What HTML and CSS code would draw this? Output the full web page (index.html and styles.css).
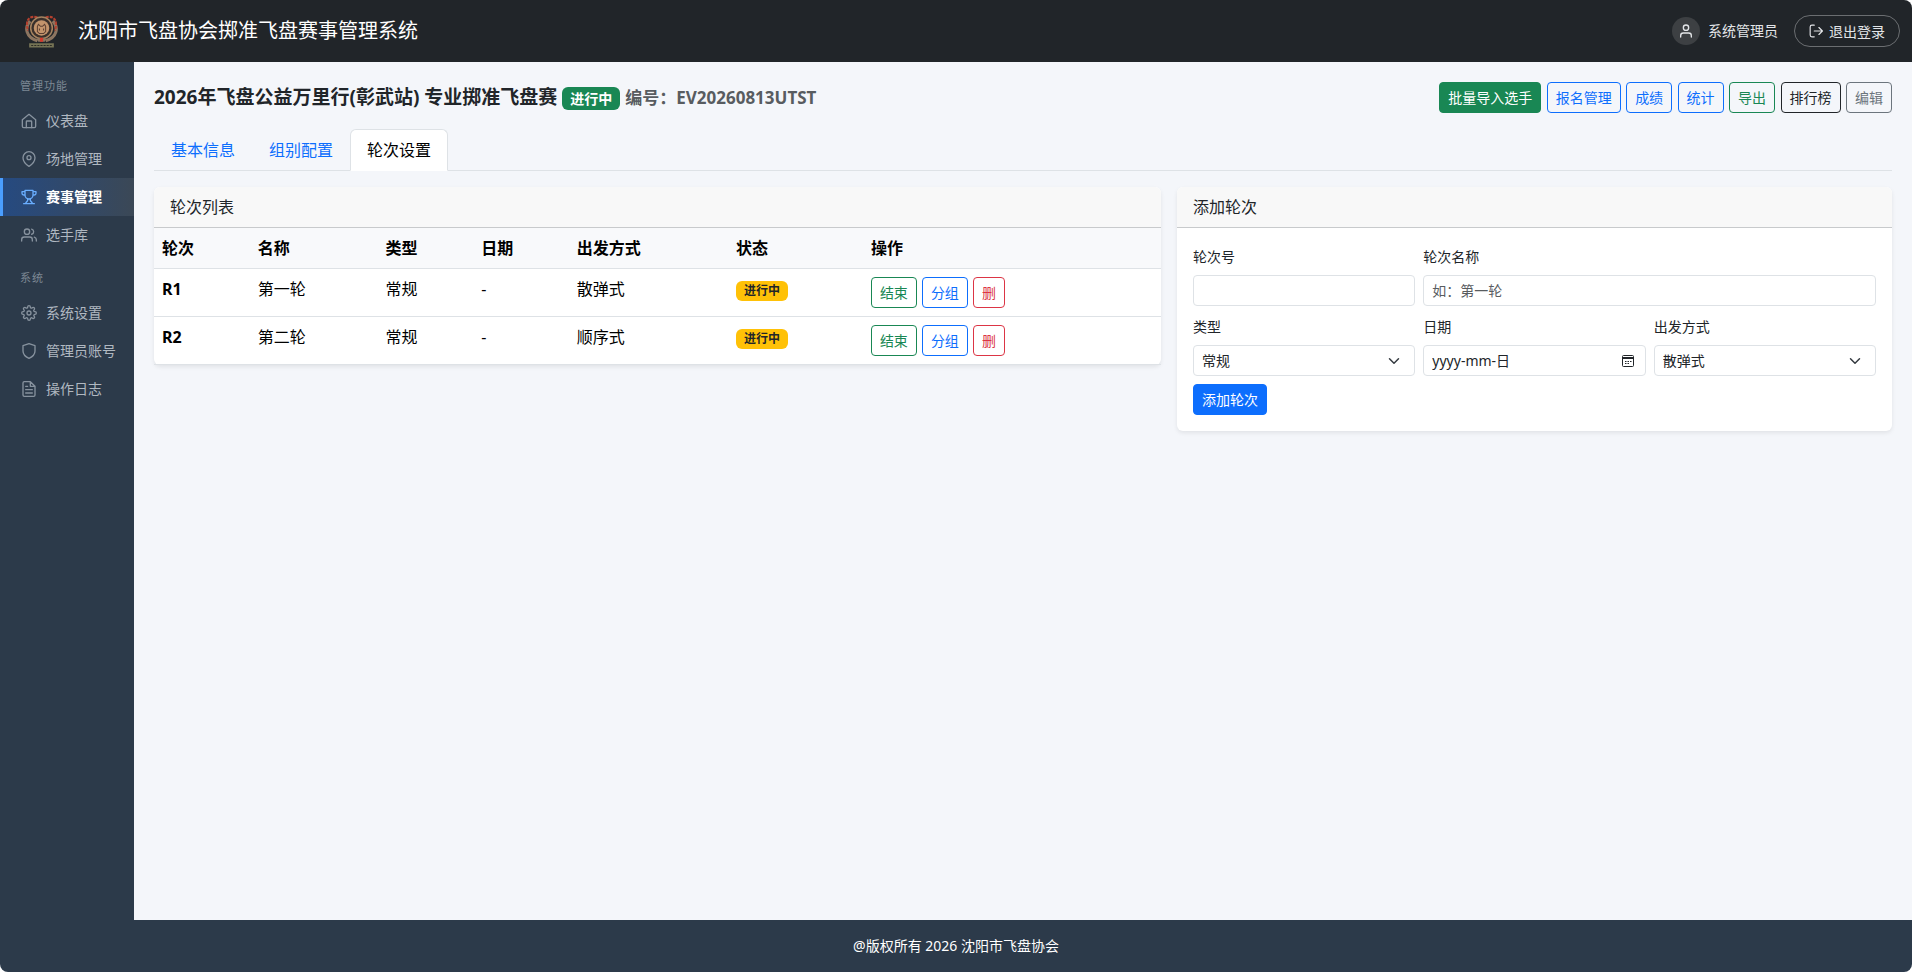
FILE: index.html
```html
<!DOCTYPE html>
<html lang="zh-CN">
<head>
    <meta charset="UTF-8">
    <meta name="viewport" content="width=device-width, initial-scale=1.0">
    <title>沈阳市飞盘协会掷准飞盘赛事管理系统</title>
    <link rel="stylesheet" href="styles.css">
</head>
<body>
<div class="app">
    <header class="topbar">
        <a class="brand" href="#">
            <svg class="brand-logo" viewBox="0 0 32 32">
                <path d="M5 6C-1 12 1 22 12 25M27 6c6 6 4 16-7 19" fill="none" stroke="#8c7560" stroke-width="3"/>
                <path d="M12 2.500C7 .5 2 3 2 8c0 3 0 5 1 7M20 2.500C25 .5 30 3 30 8c0 3 0 5-1 7" fill="none" stroke="#b4412f" stroke-width="2" stroke-dasharray="3 1"/>
                <circle cx="16" cy="12.500" r="10.500" fill="#3a302b" stroke="#a5825f" stroke-width="1.500"/>
                <circle cx="16" cy="12.500" r="7.500" fill="#c3946c"/>
                <path d="M12 16v-5l1-2 2 2h2l2-2 1 2v5l-2 2h-4zM14 13v2M18 13v2" fill="none" stroke="#5d4032"/>
                <path d="M11 23l5-1 5 1-2 3h-6z" fill="#8c7560"/>
                <path d="M14.500 22h3v4h-3z" fill="#d3392c"/>
                <path d="M4 27.500h24v4H4z" fill="#757354"/>
                <path d="M6 29.500h20" stroke="#2c2c25" stroke-dasharray="2 1"/>
            </svg>
            <span class="brand-name">沈阳市飞盘协会掷准飞盘赛事管理系统</span>
        </a>
        <div class="user-area">
            <span class="avatar">
                <svg class="icon" viewBox="0 0 24 24"><circle cx="12" cy="7" r="4"/><path d="M4 21v-2a4 4 0 0 1 4-4h8a4 4 0 0 1 4 4v2"/></svg>
            </span>
            <span class="user-name">系统管理员</span>
            <button class="logout" type="button">
                <svg class="icon" viewBox="0 0 24 24"><path d="M9 2H5a3 3 0 0 0-3 3v14a3 3 0 0 0 3 3h4M9 12h14M17 6l6 6-6 6"/></svg>
                退出登录
            </button>
        </div>
    </header>

    <div class="layout">
        <nav class="sidebar">
            <div class="nav-title">管理功能</div>
            <a class="nav-item" href="#">
                <svg class="icon" viewBox="0 0 24 24"><path d="M2 10l10-8 10 8v10a2 2 0 0 1-2 2H4a2 2 0 0 1-2-2z"/><path d="M8 22v-9a1 1 0 0 1 1-1h6a1 1 0 0 1 1 1v9"/></svg>
                仪表盘
            </a>
            <a class="nav-item" href="#">
                <svg class="icon" viewBox="0 0 24 24"><path d="M21 10c0 7-9 13-9 13s-9-6-9-13a9 9 0 0 1 18 0z"/><circle cx="12" cy="10" r="3"/></svg>
                场地管理
            </a>
            <a class="nav-item active" href="#">
                <svg class="icon" viewBox="0 0 24 24"><path d="M6 2h12v7a6 6 0 0 1-12 0zM6 9H4a2.500 2.500 0 0 1-2.500-2.500V4H6M18 9h2a2.500 2.500 0 0 0 2.500-2.500V4H18M4 22h16M10 15v2c0 2-3 2-3 5M14 15v2c0 2 3 2 3 5"/></svg>
                赛事管理
            </a>
            <a class="nav-item" href="#">
                <svg class="icon" viewBox="0 0 24 24"><path d="M17 21v-2a4 4 0 0 0-4-4H5a4 4 0 0 0-4 4v2M23 21v-2a4 4 0 0 0-3-3.870M16 3.130a4 4 0 0 1 0 7.750"/><circle cx="9" cy="7" r="4"/></svg>
                选手库
            </a>
            <div class="nav-title">系统</div>
            <a class="nav-item" href="#">
                <svg class="icon" viewBox="0 0 24 24"><circle cx="12" cy="12" r="3"/><path d="M19.400 15a1.650 1.650 0 0 0 .33 1.820l.06.06a2 2 0 1 1-2.830 2.830l-.06-.06a1.650 1.650 0 0 0-2.800 1.170V21a2 2 0 0 1-4 0v-.09a1.650 1.650 0 0 0-2.900-1.260l-.06.06a2 2 0 1 1-2.830-2.830l.06-.06A1.650 1.650 0 0 0 3.200 14H3a2 2 0 0 1 0-4h.09a1.650 1.650 0 0 0 1.260-2.900l-.06-.06a2 2 0 1 1 2.830-2.830l.06.06A1.650 1.650 0 0 0 10 3.170V3a2 2 0 0 1 4 0v.09a1.650 1.650 0 0 0 2.820 1.180l.06-.06a2 2 0 1 1 2.830 2.830l-.06.06A1.650 1.650 0 0 0 20.900 10H21a2 2 0 0 1 0 4h-.09a1.650 1.650 0 0 0-1.510 1z"/></svg>
                系统设置
            </a>
            <a class="nav-item" href="#">
                <svg class="icon" viewBox="0 0 24 24"><path d="M12 23s9-4 9-11V4l-9-3-9 3v8c0 7 9 11 9 11z"/></svg>
                管理员账号
            </a>
            <a class="nav-item" href="#">
                <svg class="icon" viewBox="0 0 24 24"><path d="M14 1H5a2 2 0 0 0-2 2v18a2 2 0 0 0 2 2h14a2 2 0 0 0 2-2V8zM14 1v7h7M17 13H7M17 18H7M10 8H7"/></svg>
                操作日志
            </a>
        </nav>

        <main class="content">
            <div class="page-head">
                <h1 class="page-title">
                    2026年飞盘公益万里行(彰武站) 专业掷准飞盘赛
                    <span class="status">进行中</span>
                    <small class="event-no">编号：EV20260813UTST</small>
                </h1>
                <div class="page-actions">
                    <button class="btn btn-success" type="button">批量导入选手</button>
                    <button class="btn btn-outline-primary" type="button">报名管理</button>
                    <button class="btn btn-outline-primary" type="button">成绩</button>
                    <button class="btn btn-outline-primary" type="button">统计</button>
                    <button class="btn btn-outline-success" type="button">导出</button>
                    <button class="btn btn-outline-dark" type="button">排行榜</button>
                    <button class="btn btn-outline-secondary" type="button">编辑</button>
                </div>
            </div>

            <div class="tabs">
                <a class="tab" href="#">基本信息</a>
                <a class="tab" href="#">组别配置</a>
                <a class="tab active" href="#">轮次设置</a>
            </div>

            <div class="columns">
                <section class="card">
                    <div class="card-header">轮次列表</div>
                    <table class="rounds">
                        <thead>
                            <tr>
                                <th class="col-no">轮次</th>
                                <th class="col-name">名称</th>
                                <th class="col-type">类型</th>
                                <th class="col-date">日期</th>
                                <th class="col-start">出发方式</th>
                                <th class="col-status">状态</th>
                                <th>操作</th>
                            </tr>
                        </thead>
                        <tbody>
                            <tr>
                                <td><strong>R1</strong></td>
                                <td>第一轮</td>
                                <td>常规</td>
                                <td>-</td>
                                <td>散弹式</td>
                                <td><span class="badge">进行中</span></td>
                                <td>
                                    <div class="row-actions">
                                        <button class="btn btn-outline-success" type="button">结束</button>
                                        <button class="btn btn-outline-primary" type="button">分组</button>
                                        <button class="btn btn-outline-danger" type="button">删</button>
                                    </div>
                                </td>
                            </tr>
                            <tr>
                                <td><strong>R2</strong></td>
                                <td>第二轮</td>
                                <td>常规</td>
                                <td>-</td>
                                <td>顺序式</td>
                                <td><span class="badge">进行中</span></td>
                                <td>
                                    <div class="row-actions">
                                        <button class="btn btn-outline-success" type="button">结束</button>
                                        <button class="btn btn-outline-primary" type="button">分组</button>
                                        <button class="btn btn-outline-danger" type="button">删</button>
                                    </div>
                                </td>
                            </tr>
                        </tbody>
                    </table>
                </section>

                <section class="card">
                    <div class="card-header">添加轮次</div>
                    <form class="round-form">
                        <div class="field">
                            <label for="round-no">轮次号</label>
                            <input type="text" id="round-no" name="round_no">
                        </div>
                        <div class="field wide">
                            <label for="round-name">轮次名称</label>
                            <input type="text" id="round-name" name="name" placeholder="如：第一轮">
                        </div>
                        <div class="field">
                            <label for="round-type">类型</label>
                            <select id="round-type" name="type">
                                <option>常规</option>
                            </select>
                            <svg class="chevron" viewBox="0 0 16 16"><path d="M2 5l6 6 6-6"/></svg>
                        </div>
                        <div class="field">
                            <label for="round-date">日期</label>
                            <input class="date-input" type="text" id="round-date" name="date" placeholder="yyyy-mm-日">
                            <svg class="calendar" viewBox="0 0 14 14"><rect x="1.500" y="1.500" width="11" height="11" rx="1"/><path d="M2 3.500h10M2 4.500h10M4 7.500h1.500M6.500 7.500H8M9 7.500h1.500M4 9.500h1.500M6.500 9.500H8"/></svg>
                        </div>
                        <div class="field">
                            <label for="start-mode">出发方式</label>
                            <select id="start-mode" name="start_mode">
                                <option>散弹式</option>
                                <option>顺序式</option>
                            </select>
                            <svg class="chevron" viewBox="0 0 16 16"><path d="M2 5l6 6 6-6"/></svg>
                        </div>
                        <div class="form-actions">
                            <button class="btn btn-primary" type="submit">添加轮次</button>
                        </div>
                    </form>
                </section>
            </div>
        </main>
    </div>

    <footer class="footer">@版权所有 2026 沈阳市飞盘协会</footer>
</div>
</body>
</html>
```
FILE: styles.css
```css
* {
    box-sizing: border-box;
}

body {
    margin: 0;
    background-color: #fff;
    color: #212529;
    font-family: "Noto Sans", "Noto Sans CJK SC", sans-serif;
    font-size: 16px;
    line-height: 24px;
}

a {
    color: inherit;
    text-decoration: none;
}

button,
input,
select {
    font-family: inherit;
}

.icon {
    width: 16px;
    height: 16px;
    flex: none;
    fill: none;
    stroke: currentColor;
    stroke-width: 2;
    stroke-linecap: round;
    stroke-linejoin: round;
}

.app {
    display: flex;
    flex-direction: column;
    min-height: 100vh;
    border-radius: 8px;
    overflow: hidden;
    background-color: #f4f6fa;
}

/* Top bar */
.topbar {
    display: flex;
    align-items: center;
    justify-content: space-between;
    height: 62px;
    padding: 0 12px 0 25px;
    background-color: #212529;
    color: #fff;
}

.brand {
    display: flex;
    align-items: center;
    gap: 20px;
}

.brand-logo {
    width: 33px;
    height: 33px;
}

.brand-name {
    font-size: 20px;
    line-height: 28px;
}

.user-area {
    display: flex;
    align-items: center;
    font-size: 14px;
    color: #e3e5e8;
}

.avatar {
    display: flex;
    align-items: center;
    justify-content: center;
    width: 28px;
    height: 28px;
    margin-right: 8px;
    border-radius: 50%;
    background-color: #3d4043;
}

.logout {
    display: flex;
    align-items: center;
    gap: 6px;
    height: 32px;
    margin-left: 16px;
    padding: 0 14px;
    border: 1px solid #6b6e71;
    border-radius: 16px;
    background: none;
    color: #e3e5e8;
    font-size: 14px;
    cursor: pointer;
}

.logout .icon {
    width: 14px;
    height: 14px;
}

/* Sidebar */
.layout {
    display: flex;
    flex: 1;
}

.sidebar {
    width: 134px;
    flex: none;
    background-color: #2c3a4a;
    color: #b0b8c1;
}

.nav-title {
    padding: 16px 20px 8px;
    color: #7d8894;
    font-size: 11px;
    line-height: 16px;
    letter-spacing: 1px;
}

.nav-item {
    display: flex;
    align-items: center;
    gap: 9px;
    height: 38px;
    padding-left: 18px;
    border-left: 3px solid transparent;
    font-size: 14px;
    white-space: nowrap;
}

.nav-item .icon {
    color: #87929e;
}

.nav-item.active {
    border-left-color: #4a9eff;
    background: linear-gradient(90deg, #264a80, #3b4856);
    color: #fff;
    font-weight: bold;
}

.nav-item.active .icon {
    color: #6aaeff;
}

/* Content */
.content {
    flex: 1;
    min-width: 0;
    padding: 20px;
}

.page-head {
    display: flex;
    align-items: center;
    justify-content: space-between;
    margin-bottom: 16px;
}

.page-title {
    margin: 0;
    font-size: 19px;
    line-height: 28px;
}

.status {
    display: inline-block;
    padding: 0 8px;
    border-radius: 6px;
    background-color: #198754;
    color: #fff;
    font-size: 14px;
    line-height: 23px;
}

.event-no {
    color: #585c60;
    font-size: 17px;
}

.page-actions {
    height: 31px;
    font-size: 21px;
    line-height: 31px;
    white-space: nowrap;
}

.btn {
    height: 31px;
    padding: 0 8px;
    border: 1px solid;
    border-radius: 4px;
    background-color: transparent;
    font-size: 14px;
    line-height: 21px;
    vertical-align: top;
    cursor: pointer;
}

.btn-success {
    border-color: #198754;
    background-color: #198754;
    color: #fff;
}

.btn-primary {
    border-color: #0d6efd;
    background-color: #0d6efd;
    color: #fff;
}

.btn-outline-primary {
    color: #0d6efd;
}

.btn-outline-success {
    color: #198754;
}

.btn-outline-danger {
    color: #dc3545;
}

.btn-outline-dark {
    color: #212529;
}

.btn-outline-secondary {
    color: #6c757d;
}

.tabs {
    display: flex;
    margin-bottom: 16px;
    border-bottom: 1px solid #dee2e6;
}

.tab {
    margin-bottom: -1px;
    padding: 8px 16px;
    border: 1px solid transparent;
    border-radius: 6px 6px 0 0;
    color: #0d6efd;
}

.tab.active {
    border-color: #dee2e6 #dee2e6 #fff;
    background-color: #fff;
    color: #000;
}

.columns {
    display: grid;
    grid-template-columns: 1007fr 715fr;
    gap: 16px;
    align-items: start;
}

.card {
    border-radius: 6px;
    background-color: #fff;
    box-shadow: 0 2px 4px rgba(0, 0, 0, 0.08);
}

.card-header {
    padding: 8px 16px;
    border-bottom: 1px solid #c8cacc;
    border-radius: 6px 6px 0 0;
    background-color: #f8f8f8;
}

/* Rounds table */
.rounds {
    width: 100%;
    border-collapse: separate;
    border-spacing: 0;
    table-layout: fixed;
    color: #000;
}

.rounds th,
.rounds td {
    padding: 8px;
    border-bottom: 1px solid #dee2e6;
    text-align: left;
    vertical-align: top;
}

.rounds th {
    background-color: #f8f9fb;
}

.col-no,
.col-type,
.col-date {
    width: 9.5%;
}

.col-name {
    width: 12.7%;
}

.col-start {
    width: 15.8%;
}

.col-status {
    width: 13.4%;
}

.badge {
    display: inline-block;
    padding: 0 8px;
    border-radius: 6px;
    background-color: #ffc107;
    color: #212529;
    font-size: 12px;
    font-weight: bold;
    line-height: 20px;
    vertical-align: middle;
}

.row-actions {
    display: flex;
    gap: 5px;
}

/* Add round form */
.round-form {
    display: grid;
    grid-template-columns: repeat(3, 1fr);
    gap: 8px;
    padding: 16px;
}

.field {
    position: relative;
}

.field.wide {
    grid-column: span 2;
}

.field label {
    display: block;
    margin-bottom: 6px;
    font-size: 14px;
    line-height: 25px;
}

.field input,
.field select {
    display: block;
    width: 100%;
    height: 31px;
    padding: 0 8px;
    border: 1px solid #dee2e6;
    border-radius: 4px;
    background-color: #fff;
    color: #212529;
    font-size: 14px;
    appearance: none;
}

.field input::placeholder {
    color: #595c5f;
}

.field .date-input::placeholder {
    color: #212529;
}

.chevron,
.calendar {
    position: absolute;
    fill: none;
    pointer-events: none;
}

.chevron {
    right: 15px;
    bottom: 9px;
    width: 12px;
    height: 12px;
    stroke: #343a40;
    stroke-width: 2;
    stroke-linecap: round;
    stroke-linejoin: round;
}

.calendar {
    right: 11px;
    bottom: 8px;
    width: 14px;
    height: 14px;
    stroke: #212529;
}

.form-actions {
    grid-column: 1 / -1;
    display: flex;
}

.footer {
    padding: 14px;
    background-color: #2c3a4a;
    color: #fff;
    font-size: 14px;
    text-align: center;
}
```
